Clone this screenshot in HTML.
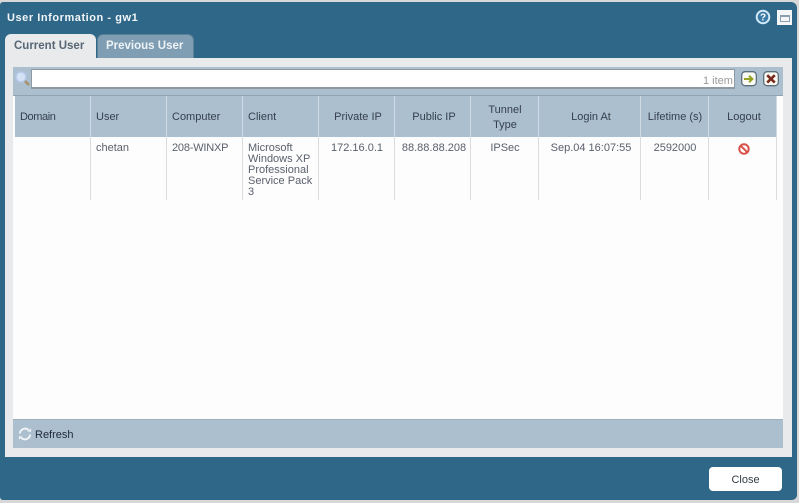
<!DOCTYPE html>
<html><head><meta charset="utf-8">
<style>
html,body{margin:0;padding:0;}
body{width:799px;height:503px;overflow:hidden;background:#d8d8d8;position:relative;font-family:"Liberation Sans",sans-serif;font-size:11px;color:#5a606c;}
div{position:absolute;box-sizing:border-box;}
.t{white-space:nowrap;line-height:11px;}
.c{text-align:center;}
.h{color:#36404c;top:112px;}
.sep{top:96px;width:1px;height:41px;background:#cfdbe4;}
.sep2{top:137px;width:1px;height:63px;background:#dcdcdc;}
</style></head><body>
<div style="left:0;top:2px;width:797px;height:498px;background:#2f6788;border-radius:3px 6px 5px 3px;"></div>
<div class="t" style="left:7px;top:13px;font-weight:bold;color:#f2f6f8;letter-spacing:.55px;">User Information - gw1</div>
<svg style="position:absolute;left:755px;top:9px" width="16" height="16"><circle cx="8" cy="8" r="6.3" fill="#3b7ba6" stroke="#cfe8f8" stroke-width="2"/><text x="8" y="11.5" text-anchor="middle" font-family="Liberation Sans" font-weight="bold" font-size="10" fill="#fff">?</text></svg>
<div style="left:777px;top:10px;width:15px;height:15px;background:#f4f6f7;"></div>
<div style="left:780px;top:15px;width:10px;height:7px;border:1px solid #8aa0b1;border-top:2px solid #8aa0b1;"></div>

<div style="left:5px;top:34px;width:91px;height:25px;background:#e9eaeb;border-radius:6px 6px 0 0;"></div>
<div class="t" style="left:14px;top:41px;font-weight:bold;color:#576776;font-size:11.5px;">Current User</div>
<div style="left:97px;top:34px;width:97px;height:24px;background:#7f9db3;border-radius:6px 6px 0 0;border:1px solid #5d8098;border-bottom:0;"></div>
<div class="t" style="left:106px;top:41px;font-weight:bold;color:#eef3f6;font-size:11.5px;">Previous User</div>

<div style="left:5px;top:58px;width:787px;height:399px;background:#e9eaeb;"></div>
<div style="left:13px;top:67px;width:770px;height:381px;background:#fdfdfd;"></div>
<div style="left:13px;top:67px;width:770px;height:29px;background:#abbfcf;border-bottom:1px solid #8fa3b3;"></div>
<div style="left:31px;top:69px;width:704px;height:20px;background:#fff;border:1px solid #8d9aa4;border-width:1px 1px 2px 1px;"></div>
<div class="t" style="left:703px;top:76px;color:#9a9a9a;">1 item</div>
<svg style="position:absolute;left:14px;top:70px" width="18" height="18"><circle cx="7" cy="7" r="5" fill="#d4e2f6" stroke="#b4c8ea" stroke-width="1.5"/><line x1="11" y1="11" x2="15" y2="15" stroke="#a88f6c" stroke-width="2.5"/></svg>
<svg style="position:absolute;left:741px;top:71px" width="16" height="16"><rect x="0.7" y="0.7" width="14.6" height="14" rx="3.5" fill="#fbfbf5" stroke="#5d6f7b" stroke-width="1.3"/><path d="M3 8h8M8 4.8l3.4 3.2L8 11.2" fill="none" stroke="#94a020" stroke-width="2"/></svg>
<svg style="position:absolute;left:763px;top:71px" width="16" height="16"><rect x="0.7" y="0.7" width="14.6" height="14" rx="3.5" fill="#fbfbf5" stroke="#5d6f7b" stroke-width="1.3"/><path d="M4.2 4.2l7.6 7.4M11.8 4.2l-7.6 7.4" fill="none" stroke="#7a2a1c" stroke-width="2.6"/></svg>

<div style="left:15px;top:96px;width:762px;height:41px;background:#abbfcf;"></div>
<div class="sep" style="left:90px"></div><div class="sep" style="left:166px"></div><div class="sep" style="left:242px"></div><div class="sep" style="left:318px"></div><div class="sep" style="left:394px"></div><div class="sep" style="left:470px"></div><div class="sep" style="left:538px"></div><div class="sep" style="left:640px"></div><div class="sep" style="left:708px"></div><div class="sep" style="left:776px"></div>
<div class="sep2" style="left:90px"></div><div class="sep2" style="left:166px"></div><div class="sep2" style="left:242px"></div><div class="sep2" style="left:318px"></div><div class="sep2" style="left:394px"></div><div class="sep2" style="left:470px"></div><div class="sep2" style="left:538px"></div><div class="sep2" style="left:640px"></div><div class="sep2" style="left:708px"></div><div class="sep2" style="left:776px"></div>

<div class="t h" style="left:20px;letter-spacing:-.4px">Domain</div>
<div class="t h" style="left:96px">User</div>
<div class="t h" style="left:172px">Computer</div>
<div class="t h" style="left:248px">Client</div>
<div class="t h c" style="left:320px;width:76px">Private IP</div>
<div class="t h c" style="left:396px;width:76px">Public IP</div>
<div class="t h c" style="left:471px;width:68px;top:103px;line-height:15px;">Tunnel<br>Type</div>
<div class="t h c" style="left:540px;width:102px">Login At</div>
<div class="t h c" style="left:641px;width:68px">Lifetime (s)</div>
<div class="t h c" style="left:710px;width:68px">Logout</div>

<div class="t" style="left:96px;top:143px">chetan</div>
<div class="t" style="left:172px;top:143px;letter-spacing:-.2px">208-WINXP</div>
<div class="t" style="left:248px;top:143px">Microsoft<br>Windows XP<br>Professional<br>Service Pack<br>3</div>
<div class="t c" style="left:319px;width:76px;top:143px">172.16.0.1</div>
<div class="t c" style="left:395px;width:78px;top:143px">88.88.88.208</div>
<div class="t c" style="left:471px;width:68px;top:143px">IPSec</div>
<div class="t c" style="left:540px;width:102px;top:143px">Sep.04 16:07:55</div>
<div class="t c" style="left:641px;width:68px;top:143px">2592000</div>
<svg style="position:absolute;left:737px;top:142px" width="14" height="14"><circle cx="7" cy="7" r="4.7" fill="#fff" stroke="#d8504a" stroke-width="2"/><line x1="3.8" y1="3.8" x2="10.2" y2="10.2" stroke="#d8504a" stroke-width="2"/></svg>

<div style="left:13px;top:419px;width:770px;height:29px;background:#abbfcf;border-top:1px solid #9fb0bd;"></div>
<svg style="position:absolute;left:18px;top:427px" width="14" height="14" viewBox="0 0 15 15"><path d="M2 7a5.5 5.5 0 0 1 9.5-3.5M13 8a5.5 5.5 0 0 1-9.5 3.5" fill="none" stroke="#f2f5f7" stroke-width="2"/><path d="M10 5h4V1.5zM5 10H1v3.5z" fill="#f2f5f7"/></svg>
<div class="t" style="left:35px;top:430px;color:#1f2a38;">Refresh</div>

<div style="left:709px;top:467px;width:73px;height:24px;background:#fff;border-radius:4px;"></div>
<div class="t c" style="left:709px;top:475px;width:73px;color:#333a44;">Close</div>
</body></html>
